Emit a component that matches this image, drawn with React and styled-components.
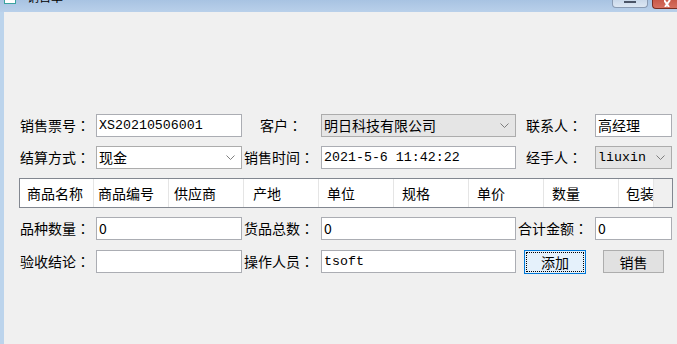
import React from 'react';
import styled, { createGlobalStyle } from 'styled-components';

const GlobalStyle = createGlobalStyle`
    html, body {
        margin: 0;
        padding: 0;
        background: #f0f0f0;
    }
    body {
        font-family: "Noto Sans CJK SC", "Noto Sans", sans-serif;
        color: #000;
    }
`

const Frame = styled.div`
    width: 677px;
    height: 344px;
    display: flex;
    flex-direction: column;
    overflow: hidden;
    background: #bcd4ec;
`
const TitleBar = styled.div`
    height: 12px;
    flex: none;
    display: flex;
    align-items: flex-start;
    overflow: hidden;
    background: linear-gradient(#a8c3e2, #b9d0ea);
`
const TitleIcon = styled.div`
    width: 10px;
    height: 12px;
    margin: -10px 0 0 4px;
    border: 1px solid #3aa3a0;
    background: #fff;
`
const TitleText = styled.span`
    margin: -10px 0 0 11px;
    font-size: 12px;
    line-height: 14px;
    color: #000;
`
const TitleButtons = styled.div`
    margin-left: auto;
    display: flex;
    gap: 4px;
`
const MinButton = styled.div`
    box-sizing: border-box;
    width: 36px;
    height: 8px;
    border: 1px solid #8a9bb3;
    border-top: none;
    border-radius: 0 0 4px 4px;
    background: linear-gradient(#c9d8ea, #dde7f3);
    display: flex;
    justify-content: center;
    &::after {
        content: '';
        width: 12px;
        height: 2px;
        margin-top: 1px;
        background: #4a5466;
    }
`
const CloseButton = styled.div`
    box-sizing: border-box;
    width: 25px;
    height: 9px;
    border: 1px solid #7a2e22;
    border-top: none;
    border-right: none;
    border-radius: 0 0 0 4px;
    background: linear-gradient(#c8594a, #d77060);
    display: flex;
    justify-content: center;
    padding-left: 6px;
`

const Client = styled.div`
    flex: 1;
    margin-left: 4px;
    background: #f0f0f0;
    padding: 102px 0 0 16px;
`
const Form = styled.div`
    display: grid;
    grid-template-columns: 76px 146px 79px 195px 79px 77px;
    grid-template-rows: 23px 23px 30px 24px 24px;
    row-gap: 9px;
`
const Label = styled.div`
    font-size: 14px;
    line-height: 23px;
    white-space: nowrap;
    padding-left: ${(props) => props.indent || 0}px;
`
const Colon = styled.span`
    font-family: "Noto Sans CJK JP", "Noto Sans CJK SC", sans-serif;
`
const TextBox = styled.div`
    box-sizing: border-box;
    height: 23px;
    border: 1px solid #abadb3;
    background: #fff;
    padding-left: 2px;
    white-space: nowrap;
    overflow: hidden;
    ${(props) => props.mono
        ? 'font-family: "Liberation Mono", "DejaVu Sans Mono", monospace; font-size: 13.3px; line-height: 21px;'
        : 'font-size: 14px; line-height: 21px;'}
`
const Combo = styled.div`
    box-sizing: border-box;
    height: 23px;
    border: 1px solid #acacac;
    background: ${(props) => props.gray ? '#e5e5e5' : '#fff'};
    display: flex;
    align-items: center;
    padding: 0 6px 0 2px;
    white-space: nowrap;
    ${(props) => props.mono
        ? 'font-family: "Liberation Mono", "DejaVu Sans Mono", monospace; font-size: 13.3px;'
        : 'font-size: 14px;'}
`
const ComboText = styled.span`
    flex: 1;
    line-height: 21px;
`

const Table = styled.div`
    grid-column: 1 / -1;
    margin: 0 -1px;
    border: 1px solid #828790;
    background: #f0f0f0;
    display: flex;
`
const HeadCell = styled.div`
    box-sizing: border-box;
    width: ${(props) => props.w}px;
    height: 28px;
    background: #fff;
    border-right: 1px solid #e5e5e5;
    padding-left: ${(props) => props.indent}px;
    font-size: 14px;
    line-height: 28px;
    white-space: nowrap;
    overflow: hidden;
`

const ButtonCell = styled.div`
    display: flex;
    padding-left: ${(props) => props.indent}px;
`
const Button = styled.div`
    box-sizing: border-box;
    width: ${(props) => props.w}px;
    height: ${(props) => props.focused ? 24 : 23}px;
    border: 1px solid ${(props) => props.focused ? '#0078d7' : '#adadad'};
    background: ${(props) => props.focused ? '#e5f1fb' : '#e1e1e1'};
    display: flex;
    align-items: center;
    justify-content: center;
    font-size: 14px;
    ${(props) => props.focused && `
        outline: 1px dotted #000;
        outline-offset: -3px;
    `}
`

const Chevron = () => (
    <svg width="9" height="5" viewBox="0 0 9 5">
        <path d="M0.5 0.5 L4.5 4.5 L8.5 0.5" fill="none" stroke="#707070" strokeWidth="0.9" />
    </svg>
)

const columns = [
    ['商品名称', 74, 7],
    ['商品编号', 75, 4],
    ['供应商', 75, 5],
    ['产地', 75, 9],
    ['单位', 75, 8],
    ['规格', 75, 8],
    ['单价', 75, 8],
    ['数量', 75, 8],
    ['包装', 35, 7],
]

const Field = ({ indent, children }) => (
    <Label indent={indent}>{children}<Colon>：</Colon></Label>
)

export default function App() {
    return (
        <Frame>
            <GlobalStyle />
            <TitleBar>
                <TitleIcon />
                <TitleText>销售单</TitleText>
                <TitleButtons>
                    <MinButton />
                    <CloseButton>
                        <svg width="8" height="7" viewBox="0 0 8 7">
                            <path d="M0 0 L5 7 M6 0 L1 7" stroke="#fff" strokeWidth="2" />
                        </svg>
                    </CloseButton>
                </TitleButtons>
            </TitleBar>
            <Client>
                <Form>
                    <Field>销售票号</Field>
                    <TextBox mono>XS20210506001</TextBox>
                    <Field indent={18}>客户</Field>
                    <Combo gray><ComboText>明日科技有限公司</ComboText><Chevron /></Combo>
                    <Field indent={10}>联系人</Field>
                    <TextBox>高经理</TextBox>

                    <Field>结算方式</Field>
                    <Combo><ComboText>现金</ComboText><Chevron /></Combo>
                    <Field indent={2}>销售时间</Field>
                    <TextBox mono>2021-5-6 11:42:22</TextBox>
                    <Field indent={10}>经手人</Field>
                    <Combo gray mono><ComboText>liuxin</ComboText><Chevron /></Combo>

                    <Table>
                        {columns.map(([name, w, indent]) => (
                            <HeadCell key={name} w={w} indent={indent}>{name}</HeadCell>
                        ))}
                    </Table>

                    <Field>品种数量</Field>
                    <TextBox>0</TextBox>
                    <Field indent={2}>货品总数</Field>
                    <TextBox>0</TextBox>
                    <Field indent={2}>合计金额</Field>
                    <TextBox>0</TextBox>

                    <Field>验收结论</Field>
                    <TextBox />
                    <Field indent={2}>操作人员</Field>
                    <TextBox mono>tsoft</TextBox>
                    <ButtonCell indent={8}><Button focused w={62}>添加</Button></ButtonCell>
                    <ButtonCell indent={8}><Button w={61}>销售</Button></ButtonCell>
                </Form>
            </Client>
        </Frame>
    );
}
